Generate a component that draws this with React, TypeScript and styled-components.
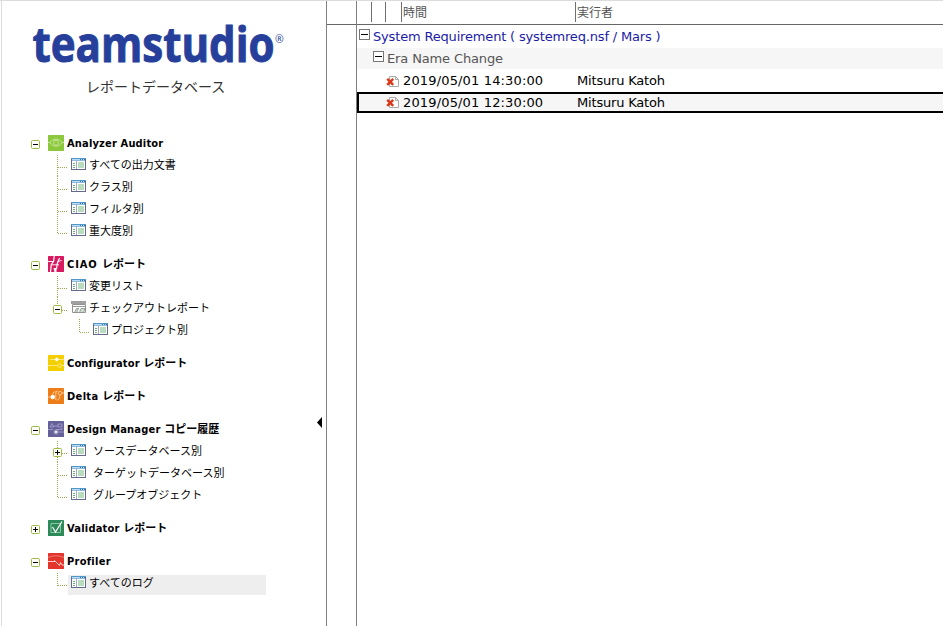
import React from "react";
import styled, { createGlobalStyle } from "styled-components";

const GlobalStyle = createGlobalStyle`
  body { margin: 0; background: #fff; overflow: hidden; }
  * { box-sizing: border-box; }
  svg { display: block; flex: none; }
`;

const Page = styled.div`
  display: grid;
  grid-template-columns: 326px 31px minmax(0, 1fr);
  width: 100%;
  height: 626px;
  border-top: 1px solid #dcdcdc;
  font-family: "DejaVu Sans", "Noto Sans CJK JP", sans-serif;
  color: #000;
`;

const Sidebar = styled.aside`
  position: relative;
  margin-left: 1px;
  border-left: 1px solid #dcdcdc;
`;

const Brand = styled.header`
  display: flex;
  flex-direction: column;
  height: 131px;
  padding-left: 29px;
`;

const Subtitle = styled.div`
  margin: 3px 0 0 55px;
  font: 14px/22px "Noto Sans CJK JP", sans-serif;
  color: #333;
  white-space: nowrap;
`;

const Collapse = styled.svg`
  position: absolute;
  left: 315px;
  top: 416px;
`;

const Group = styled.section`
  margin-bottom: 11px;
`;

const Row = styled.div`
  display: flex;
  align-items: flex-start;
  height: 22px;
  padding-left: 29px;
`;

const ToggleCell = styled.div`
  width: 17px;
  padding-top: 8px;
`;

const IconCell = styled.div`
  width: 19px;
  padding-top: 3px;
`;

const GroupLabel = styled.span<{ $track: number }>`
  margin-top: 1px;
  font: bold 11px/22px "DejaVu Sans", "Noto Sans CJK JP", sans-serif;
  font-stretch: condensed;
  letter-spacing: ${(p) => p.$track}px;
  white-space: nowrap;
`;

const Latin = styled.span`
  white-space: pre;
`;

const Kana = styled.span`
  letter-spacing: 0;
`;

const ItemRow = styled.div`
  display: flex;
  height: 22px;
  padding-left: 50px;
`;

const NestedRow = styled(ItemRow)`
  padding-left: 72px;
`;

const Entry = styled.div<{ $selected?: boolean; $gap?: number }>`
  display: flex;
  align-items: flex-start;
  gap: ${(p) => p.$gap ?? 3}px;
  width: 198px;
  height: 20px;
  margin-top: 3px;
  padding: 1px 0 0 3px;
  background: ${(p) => (p.$selected ? "#eeeeee" : "transparent")};
`;

const EntryLabel = styled.span`
  font: 11px/20px "Noto Sans CJK JP", sans-serif;
  margin-top: -4px;
  white-space: nowrap;
`;

const Gutter = styled.div`
  border: solid #808080;
  border-width: 0 1px;
`;

const GutterHead = styled.div`
  height: 24px;
  border-bottom: 1px solid #666;
`;

const View = styled.main`
  min-width: 0;
`;

const ViewHead = styled.div`
  display: grid;
  grid-template-columns: 15px 14px 16px 174px 1fr;
  height: 24px;
  padding: 1px 0 2px;
  border-bottom: 1px solid #666;
`;

const HeadCell = styled.div`
  border-right: 1px solid #707070;
  padding-left: 1px;
  font: 12px/20px "Noto Sans CJK JP", sans-serif;
  color: #555;
  &:last-child { border-right: 0; }
`;

const Category = styled.div<{ $depth: number; $shade?: boolean; $color: string }>`
  display: flex;
  align-items: flex-start;
  gap: 3px;
  height: ${(p) => (p.$shade ? 21 : 23)}px;
  margin-bottom: ${(p) => (p.$shade ? 1 : 0)}px;
  padding-left: ${(p) => 2 + p.$depth * 14}px;
  background: ${(p) => (p.$shade ? "#f6f6f6" : "#fff")};
  color: ${(p) => p.$color};
`;

const BoxCell = styled.div<{ $top: number }>`
  padding-top: ${(p) => p.$top}px;
`;

const Text = styled.span<{ $track?: number; $line?: number }>`
  font-size: 13px;
  line-height: ${(p) => p.$line ?? 22}px;
  letter-spacing: ${(p) => p.$track ?? 0}px;
  white-space: pre;
`;

const Doc = styled.div<{ $focused?: boolean }>`
  display: grid;
  grid-template-columns: 17px 174px 1fr;
  align-items: center;
  height: ${(p) => (p.$focused ? 21 : 22)}px;
  margin-left: ${(p) => (p.$focused ? 0 : 2)}px;
  padding-left: 27px;
  border: ${(p) => (p.$focused ? "2px solid #000" : "0")};
  border-right: 0;
  background: ${(p) => (p.$focused ? "#f6f6f6" : "#fff")};
`;

const Toggle = ({ open }: { open: boolean }) => (
  <svg width="9" height="9" viewBox="0 0 9 9">
    <rect x=".5" y=".5" width="8" height="8" rx="1" fill="#fff" stroke="#9dbb42" />
    <path d={open ? "M2 4.5h5" : "M2 4.5h5M4.5 2v5"} stroke="#000" />
  </svg>
);

type BranchProps = { last?: boolean; first?: boolean; toggle?: "open" | "closed" };

const Branch = ({ last, first, toggle }: BranchProps) => (
  <svg width="16" height="22" viewBox="0 0 16 22">
    <g stroke="#a0a550" strokeDasharray="1 1" shapeRendering="crispEdges">
      <path d={`M5.5 ${first ? 1 : 0}V${last ? 14 : 22}`} />
      <path d="M6 13.5H16" />
    </g>
    {toggle && (
      <g transform="translate(1 8)">
        <rect x=".5" y=".5" width="8" height="8" rx="1" fill="#fff" stroke="#9dbb42" />
        <path d={toggle === "open" ? "M2 4.5h5" : "M2 4.5h5M4.5 2v5"} stroke="#000" />
      </g>
    )}
  </svg>
);

const ViewIcon = () => (
  <svg width="15" height="12" viewBox="0 0 15 12" shapeRendering="crispEdges">
    <rect x=".5" y=".5" width="14" height="11" fill="#fff" stroke="#66698c" />
    <path d="M0 .5h15" stroke="#5497c8" />
    <path d="M1 1.5h13" stroke="#b5dcf2" />
    <path d="M9 1.5h1M11 1.5h1M13 1.5h1" stroke="#287bb9" />
    <path d="M1 2.5h13" stroke="#8fbcdc" />
    <path d="M5.5 3v8" stroke="#a5a7bb" />
    <path d="M2 5.5h2M2 7.5h2M2 9.5h2" stroke="#69ae7b" />
    <rect x="7" y="4" width="6" height="6" fill="#b8dcbd" />
  </svg>
);

const FolderViewIcon = () => (
  <svg width="15" height="13" viewBox="0 0 15 13">
    <path d="M0 0h15v3H0z" fill="#a0a0a0" />
    <path d="M1.5 3.5h13v8h-13z" fill="#fff" stroke="#929292" />
    <path d="M2 5.5h12" stroke="#9a9a9a" />
    <path d="M3.5 11.5l2-4h2.2l-2 4zM8.5 11.5l1.5-4h4l-1.5 4z" stroke="#829085" strokeWidth=".8" fill="#d4ddd4" />
  </svg>
);

type Kind = "analyzer" | "ciao" | "config" | "delta" | "design" | "validator" | "profiler";

const tileColor: Record<Kind, string> = {
  analyzer: "#8cc83c",
  ciao: "#d81b60",
  config: "#f4cf00",
  delta: "#ef7d17",
  design: "#66609a",
  validator: "#2b8a57",
  profiler: "#e4352d",
};

const tileArt: Record<Kind, React.ReactNode> = {
  analyzer: (
    <g stroke="#cdeaa4" strokeWidth=".9">
      <path d="M0 7.5h2C5 3 11 3 14 7.5h2M2 7.5C5 12.5 11 12.5 14 7.5" />
      <circle cx="8" cy="7.7" r="2.4" />
    </g>
  ),
  ciao: (
    <g stroke="#fff">
      <path d="M6.3 0L5.5 5.5 3.3 8.5 2.5 16M11.5 2L9.3 7.5 8.5 13" strokeWidth="1.2" />
      <path d="M0 5.5h5.5M4 8.8h7M9.5 5.5l4-1" strokeWidth=".9" />
      <path d="M5.5 12L6.5 16h2V12z" fill="#fff" stroke="none" />
    </g>
  ),
  config: (
    <g stroke="#fff0a0" strokeWidth=".8">
      <path d="M2 4.5h6M10 4.5h6M0 10.5h6q2 0 3 0M13.5 10.5H16" />
      <circle cx="8.8" cy="4.5" r="1.4" fill="#fff" stroke="#fff" />
      <circle cx="11.5" cy="10.7" r="1.8" />
    </g>
  ),
  delta: (
    <g stroke="#ffd9b2" strokeWidth=".8">
      <circle cx="4.7" cy="9" r="1.9" fill="#fff" stroke="#fff" />
      <circle cx="12" cy="5.2" r="1.8" />
      <path d="M0 9h2.5M7.8 12V5q0-2 2-2M9 12.5q3-1 3-5.3M4.5 6.5Q5 4 7.5 3.5M14 5h2" />
    </g>
  ),
  design: (
    <g stroke="#aaa4cf" strokeWidth=".8">
      <path d="M2 6l2-3.5L6 6zM6 5h4M10 3h4v3h-4zM0 8.5h5M10.5 11H16M8 8.5h6V7" />
      <circle cx="8" cy="11" r="2.2" />
      <circle cx="8" cy="11" r="1" fill="#fff" stroke="#fff" />
    </g>
  ),
  validator: (
    <g stroke="#a6d6ba">
      <path d="M3 3.5h9.5v9H3z" strokeWidth=".8" />
      <path d="M4.5 7l3 5L14 1.5" strokeWidth="1.2" stroke="#fff" />
    </g>
  ),
  profiler: (
    <g stroke="#ffb9b2" strokeWidth=".9">
      <path d="M0 4.5Q8 1 16 4.5" stroke="#f3827b" />
      <path d="M0 8.5h6.5v-1l5 5 1-3 1.5 2.5h2" stroke="#ffe0dc" />
    </g>
  ),
};

const Tile = ({ kind }: { kind: Kind }) => (
  <svg width="16" height="16" viewBox="0 0 16 16" fill="none">
    <rect width="16" height="16" rx=".5" fill={tileColor[kind]} />
    {tileArt[kind]}
  </svg>
);

const ExpandBox = () => (
  <svg width="11" height="11" viewBox="0 0 11 11" shapeRendering="crispEdges">
    <rect x=".5" y=".5" width="10" height="10" fill="#fff" stroke="#777" />
    <path d="M2 5.5h7" stroke="#000" />
  </svg>
);

const ErrorDocIcon = () => (
  <svg width="13" height="11" viewBox="0 0 13 11">
    <path d="M3.5.5h6l3 3v7h-9z" fill="#fff" stroke="#aaa" />
    <path d="M9.5.5v3h3" fill="none" stroke="#aaa" />
    <path d="M1.2 2.9l6 6M7.2 2.9l-6 6" stroke="#dc3818" strokeWidth="2.4" />
  </svg>
);

type Item = { text: string; nested?: boolean; folder?: boolean; toggle?: "open" | "closed"; selected?: boolean; gap?: number };
type GroupData = { kind: Kind; latin: string; kana?: string; open?: boolean; track: number; items?: Item[] };

const groups: GroupData[] = [
  {
    kind: "analyzer", latin: "Analyzer Auditor", open: true, track: 0.17,
    items: [{ text: "すべての出力文書" }, { text: "クラス別" }, { text: "フィルタ別" }, { text: "重大度別" }],
  },
  {
    kind: "ciao", latin: "CIAO ", kana: "レポート", open: true, track: 0.9,
    items: [
      { text: "変更リスト" },
      { text: "チェックアウトレポート", folder: true, toggle: "open" },
      { text: "プロジェクト別", nested: true },
    ],
  },
  { kind: "config", latin: "Configurator ", kana: "レポート", track: 0.15 },
  { kind: "delta", latin: "Delta ", kana: "レポート", track: 0.35 },
  {
    kind: "design", latin: "Design Manager ", kana: "コピー履歴", open: true, track: 0.2,
    items: [
      { text: "ソースデータベース別", toggle: "closed", gap: 7 },
      { text: "ターゲットデータベース別", gap: 7 },
      { text: "グループオブジェクト", gap: 7 },
    ],
  },
  { kind: "validator", latin: "Validator ", kana: "レポート", open: false, track: 0.22 },
  { kind: "profiler", latin: "Profiler", open: true, track: 0.28, items: [{ text: "すべてのログ", selected: true }] },
];

const TreeItem = ({ item, first, last }: { item: Item; first: boolean; last: boolean }) => {
  const Wrap = item.nested ? NestedRow : ItemRow;
  return (
    <Wrap>
      <Branch first={first} last={last} toggle={item.toggle} />
      <Entry $selected={item.selected} $gap={item.gap}>
        {item.folder ? <FolderViewIcon /> : <ViewIcon />}
        <EntryLabel>{item.text}</EntryLabel>
      </Entry>
    </Wrap>
  );
};

const TreeGroup = ({ data }: { data: GroupData }) => {
  const items = data.items ?? [];
  return (
    <Group>
      <Row>
        <ToggleCell>{data.open !== undefined && <Toggle open={data.open} />}</ToggleCell>
        <IconCell><Tile kind={data.kind} /></IconCell>
        <GroupLabel $track={data.track}>
          <Latin>{data.latin}</Latin>
          {data.kana && <Kana>{data.kana}</Kana>}
        </GroupLabel>
      </Row>
      {items.map((item, i) => (
        <TreeItem
          key={item.text}
          item={item}
          first={i === 0}
          last={i === items.length - 1 || Boolean(items[i + 1]?.nested)}
        />
      ))}
    </Group>
  );
};

const Logo = () => (
  <svg width="256" height="71" viewBox="0 0 256 71" fill="#263f9b">
    <text
      x="1.5" y="60.5" fontFamily="Open Sans" fontWeight="700" fontSize="49"
      textLength="242" lengthAdjust="spacingAndGlyphs" stroke="#263f9b" strokeWidth="1"
    >
      teamstudio
    </text>
    <text x="244" y="41.5" fontFamily="Open Sans" fontSize="10.5">®</text>
  </svg>
);

export default function App() {
  return (
    <>
      <GlobalStyle />
      <Page>
        <Sidebar>
          <Brand>
            <Logo />
            <Subtitle>レポートデータベース</Subtitle>
          </Brand>
          {groups.map((g) => <TreeGroup key={g.kind} data={g} />)}
          <Collapse width="5" height="11" viewBox="0 0 5 11">
            <path d="M5 0v11L0 5.5z" fill="#000" />
          </Collapse>
        </Sidebar>
        <Gutter><GutterHead /></Gutter>
        <View>
          <ViewHead>
            <HeadCell /><HeadCell /><HeadCell />
            <HeadCell>時間</HeadCell>
            <HeadCell>実行者</HeadCell>
          </ViewHead>
          <Category $depth={0} $color="#1c1ca8">
            <BoxCell $top={4}><ExpandBox /></BoxCell>
            <Text $track={-0.17} $line={24}>System Requirement ( systemreq.nsf / Mars )</Text>
          </Category>
          <Category $depth={1} $shade $color="#555">
            <BoxCell $top={3}><ExpandBox /></BoxCell>
            <Text $track={-0.13}>Era Name Change</Text>
          </Category>
          <Doc>
            <ErrorDocIcon />
            <Text $track={0.15}>2019/05/01 14:30:00</Text>
            <Text $track={-0.18}>Mitsuru Katoh</Text>
          </Doc>
          <Doc $focused>
            <ErrorDocIcon />
            <Text $track={0.15} $line={17}>2019/05/01 12:30:00</Text>
            <Text $track={-0.18} $line={17}>Mitsuru Katoh</Text>
          </Doc>
        </View>
      </Page>
    </>
  );
}
